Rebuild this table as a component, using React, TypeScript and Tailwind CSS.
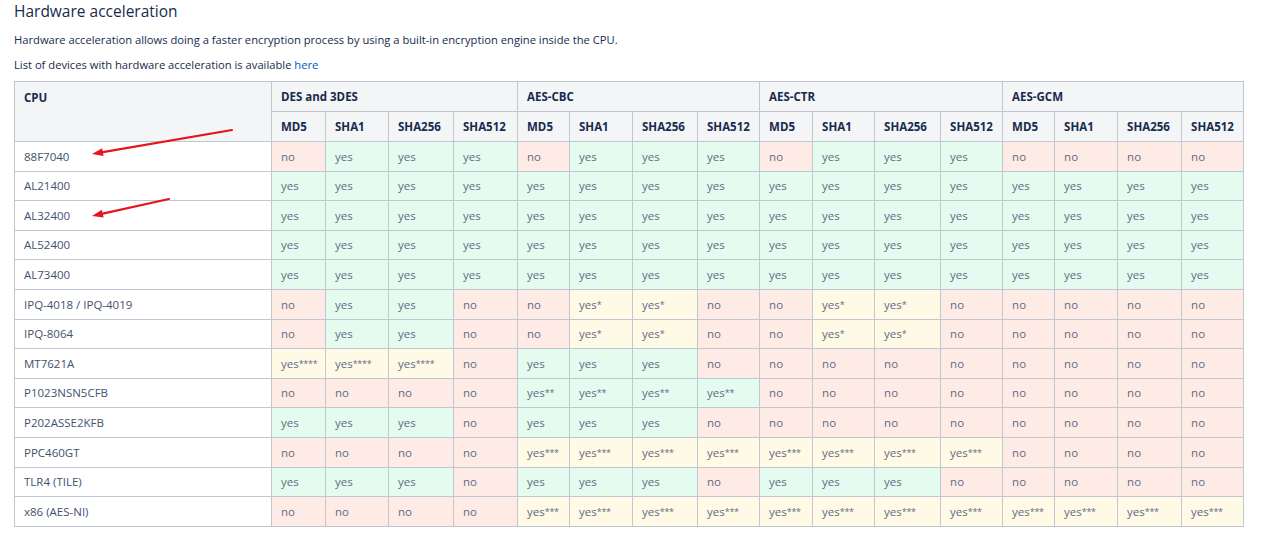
const algos = ['DES and 3DES', 'AES-CBC', 'AES-CTR', 'AES-GCM'];
const hashes = ['MD5', 'SHA1', 'SHA256', 'SHA512'];
const colWidths = [54, 63, 65, 64, 52, 63, 65, 62, 53, 62, 66, 62, 52, 63, 64, 62];

const allYes = Array(16).fill('yes');

const rows: { cpu: string; cells: string[] }[] = [
  { cpu: '88F7040', cells: ['no', 'yes', 'yes', 'yes', 'no', 'yes', 'yes', 'yes', 'no', 'yes', 'yes', 'yes', 'no', 'no', 'no', 'no'] },
  { cpu: 'AL21400', cells: allYes },
  { cpu: 'AL32400', cells: allYes },
  { cpu: 'AL52400', cells: allYes },
  { cpu: 'AL73400', cells: allYes },
  { cpu: 'IPQ-4018 / IPQ-4019', cells: ['no', 'yes', 'yes', 'no', 'no', 'yes*', 'yes*', 'no', 'no', 'yes*', 'yes*', 'no', 'no', 'no', 'no', 'no'] },
  { cpu: 'IPQ-8064', cells: ['no', 'yes', 'yes', 'no', 'no', 'yes*', 'yes*', 'no', 'no', 'yes*', 'yes*', 'no', 'no', 'no', 'no', 'no'] },
  { cpu: 'MT7621A', cells: ['yes****', 'yes****', 'yes****', 'no', 'yes', 'yes', 'yes', 'no', 'no', 'no', 'no', 'no', 'no', 'no', 'no', 'no'] },
  { cpu: 'P1023NSN5CFB', cells: ['no', 'no', 'no', 'no', 'yes**', 'yes**', 'yes**', 'yes**', 'no', 'no', 'no', 'no', 'no', 'no', 'no', 'no'] },
  { cpu: 'P202ASSE2KFB', cells: ['yes', 'yes', 'yes', 'no', 'yes', 'yes', 'yes', 'no', 'no', 'no', 'no', 'no', 'no', 'no', 'no', 'no'] },
  { cpu: 'PPC460GT', cells: ['no', 'no', 'no', 'no', 'yes***', 'yes***', 'yes***', 'yes***', 'yes***', 'yes***', 'yes***', 'yes***', 'no', 'no', 'no', 'no'] },
  { cpu: 'TLR4 (TILE)', cells: ['yes', 'yes', 'yes', 'no', 'yes', 'yes', 'yes', 'no', 'yes', 'yes', 'yes', 'no', 'no', 'no', 'no', 'no'] },
  { cpu: 'x86 (AES-NI)', cells: ['no', 'no', 'no', 'no', 'yes***', 'yes***', 'yes***', 'yes***', 'yes***', 'yes***', 'yes***', 'yes***', 'yes***', 'yes***', 'yes***', 'yes***'] },
];

function cellBg(v: string) {
  if (v === 'no') return 'bg-[#ffebe6]';
  if (v === 'yes' || v === 'yes**') return 'bg-[#e3fcef]';
  return 'bg-[#fffae6]';
}

function CellText({ value }: { value: string }) {
  const base = value.replace(/\*+$/, '');
  const stars = value.slice(base.length);
  return (
    <>
      {base}
      {stars && <span className="text-[9px] tracking-[-0.3px] align-[1px]">{stars}</span>}
    </>
  );
}

function Arrow({ x1, y1, x2, y2 }: { x1: number; y1: number; x2: number; y2: number }) {
  const ang = Math.atan2(y2 - y1, x2 - x1);
  const len = 11;
  const w = 4;
  const bx = x2 - len * Math.cos(ang);
  const by = y2 - len * Math.sin(ang);
  const px = -Math.sin(ang) * w;
  const py = Math.cos(ang) * w;
  return (
    <g>
      <line x1={x1} y1={y1} x2={bx} y2={by} stroke="#e8141c" strokeWidth={2.2} strokeLinecap="round" />
      <polygon points={`${x2},${y2} ${bx + px},${by + py} ${bx - px},${by - py}`} fill="#e8141c" />
    </g>
  );
}

export default function App() {
  return (
    <div className="relative w-[1280px] h-[533px] bg-white px-[14px] font-['Open_Sans',sans-serif] text-[#172b4d]">
      <h2 className="text-[15.5px] leading-[22px] font-normal">Hardware acceleration</h2>
      <p className="mt-[10px] text-[11.2px] leading-[16px] text-[#172b4d]">
        Hardware acceleration allows doing a faster encryption process by using a built-in encryption engine inside the CPU.
      </p>
      <p className="mt-[9px] text-[11.2px] leading-[16px] text-[#172b4d]">
        List of devices with hardware acceleration is available <span className="text-[#0052cc]">here</span>
      </p>

      <table className="mt-[8px] table-fixed border-collapse w-[1229px] text-[11.5px]">
        <colgroup>
          <col className="w-[257px]" />
          {colWidths.map((w, i) => (
            <col key={i} style={{ width: w }} />
          ))}
        </colgroup>
        <thead>
          <tr className="h-[30px]">
            <th rowSpan={2} className="bg-[#f4f5f7] border border-[#c1c7d0] text-left align-top pl-[9px] pt-[7px] font-bold text-[#172b4d]">
              CPU
            </th>
            {algos.map((a) => (
              <th key={a} colSpan={4} className="bg-[#f4f5f7] border border-[#c1c7d0] text-left pl-[9px] font-bold">
                {a}
              </th>
            ))}
          </tr>
          <tr className="h-[30px]">
            {algos.flatMap((a) =>
              hashes.map((h) => (
                <th key={a + h} className="bg-[#f4f5f7] border border-[#c1c7d0] text-left pl-[9px] font-bold">
                  {h}
                </th>
              ))
            )}
          </tr>
        </thead>
        <tbody>
          {rows.map((r) => (
            <tr key={r.cpu} className="h-[29.6px]">
              <td className="border border-[#c1c7d0] pl-[9px] text-[#42526e]">{r.cpu}</td>
              {r.cells.map((c, i) => (
                <td key={i} className={`${cellBg(c)} border border-[#c1c7d0] pl-[9px] text-[#5e6c84]`}>
                  <CellText value={c} />
                </td>
              ))}
            </tr>
          ))}
        </tbody>
      </table>

      <svg className="absolute left-0 top-0 pointer-events-none" width="1280" height="533">
        <Arrow x1={232} y1={130} x2={92} y2={154} />
        <Arrow x1={169} y1={199} x2={92} y2={216} />
      </svg>
    </div>
  );
}
